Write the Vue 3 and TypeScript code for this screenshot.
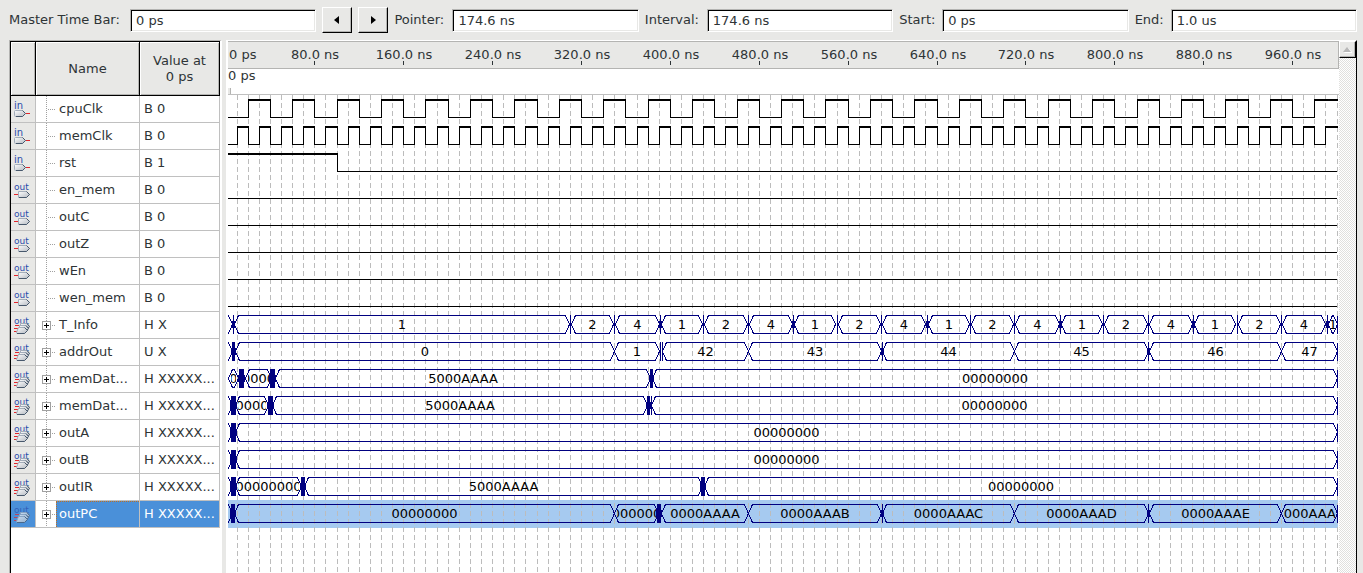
<script setup lang="ts">
import { computed, onBeforeUnmount, onMounted, ref } from 'vue'

interface Field {
  id: string
  label: string
  value: string
  cls: string
}

interface Cell {
  from: number
  to: number
  label: string
}

interface Burst {
  at: number
  width: number
}

interface Signal {
  name: string
  value: string
  kind: 'in' | 'out' | 'bus'
  high?: [number, number][]
  cells?: Cell[]
  bursts?: Burst[]
}

const END = 1000
const ROW = 27

const fields: Field[] = [
  { id: 'pointer', label: 'Pointer:', value: '174.6 ns', cls: 'pointer' },
  { id: 'interval', label: 'Interval:', value: '174.6 ns', cls: 'interval' },
  { id: 'start', label: 'Start:', value: '0 ps', cls: 'start' },
  { id: 'end', label: 'End:', value: '1.0 us', cls: 'end' },
]

function clock(period: number): [number, number][] {
  const out: [number, number][] = []
  for (let t = period / 2; t < END; t += period) out.push([t, Math.min(t + period / 2, END)])
  return out
}

function cells(...list: [number, number, string][]): Cell[] {
  return list.map(([from, to, label]) => ({ from, to, label }))
}

function bursts(...list: [number, number][]): Burst[] {
  return list.map(([at, width]) => ({ at, width }))
}

function stateCells(): Cell[] {
  const edges = [310, 350, 391, 430, 470, 511, 550, 590, 631, 670, 710, 751, 790, 830, 871, 910, 950, 991, 1000]
  const names = ['2', '4', '1']
  const list: Cell[] = [{ from: 8, to: 309, label: '1' }]
  for (let i = 0; i < edges.length - 1; i++) {
    list.push({ from: edges[i] + 1, to: i === edges.length - 2 ? END : edges[i + 1] - 1, label: names[i % 3] })
  }
  return list
}

const zeros = '00000000'

const signals: Signal[] = [
  { name: 'cpuClk', value: 'B 0', kind: 'in', high: clock(40) },
  { name: 'memClk', value: 'B 0', kind: 'in', high: clock(20) },
  { name: 'rst', value: 'B 1', kind: 'in', high: [[0, 100]] },
  { name: 'en_mem', value: 'B 0', kind: 'out', high: [] },
  { name: 'outC', value: 'B 0', kind: 'out', high: [] },
  { name: 'outZ', value: 'B 0', kind: 'out', high: [] },
  { name: 'wEn', value: 'B 0', kind: 'out', high: [] },
  { name: 'wen_mem', value: 'B 0', kind: 'out', high: [] },
  {
    name: 'T_Info', value: 'H X', kind: 'bus',
    cells: [{ from: -4, to: 6, label: '' }, ...stateCells()],
    bursts: bursts([7, 2], [310, 1], [350, 1], [391, 2], [430, 1], [470, 1], [511, 2], [550, 1], [590, 1], [631, 2],
      [670, 1], [710, 1], [751, 2], [790, 1], [830, 1], [871, 2], [910, 1], [950, 1], [991, 2]),
  },
  {
    name: 'addrOut', value: 'U X', kind: 'bus',
    cells: cells([-4, 6, ''], [9, 350, '0'], [350, 390, '1'], [393, 470, '42'], [470, 590, '43'], [591, 710, '44'],
      [710, 830, '45'], [831, 950, '46'], [950, 1000, '47']),
    bursts: bursts([7, 3], [391, 1], [393, 1], [591, 2], [830, 2]),
  },
  {
    name: 'memDat...', value: 'H XXXXX...', kind: 'bus',
    cells: cells([2, 11, '0'], [18, 41, zeros], [45, 382, '5000AAAA'], [384, 1000, zeros]),
    bursts: bursts([14, 5], [42, 5], [383, 3]),
  },
  {
    name: 'memDat...', value: 'H XXXXX...', kind: 'bus',
    cells: cells([-4, 6, ''], [9, 38, zeros], [42, 379, '5000AAAA'], [383, 1000, zeros]),
    bursts: bursts([7, 5], [40, 5], [380, 3], [383, 1]),
  },
  {
    name: 'outA', value: 'H XXXXX...', kind: 'bus',
    cells: cells([-4, 6, ''], [9, 1000, zeros]), bursts: bursts([7, 5]),
  },
  {
    name: 'outB', value: 'H XXXXX...', kind: 'bus',
    cells: cells([-4, 6, ''], [9, 1000, zeros]), bursts: bursts([7, 5]),
  },
  {
    name: 'outIR', value: 'H XXXXX...', kind: 'bus',
    cells: cells([-4, 6, ''], [9, 68, zeros], [71, 429, '5000AAAA'], [431, 1000, zeros]),
    bursts: bursts([7, 5], [70, 4], [430, 4]),
  },
  {
    name: 'outPC', value: 'H XXXXX...', kind: 'bus',
    cells: cells([-4, 6, ''], [8, 350, zeros], [350, 389, zeros], [392, 470, '0000AAAA'], [470, 590, '0000AAAB'],
      [591, 710, '0000AAAC'], [710, 830, '0000AAAD'], [831, 950, '0000AAAE'], [950, 1000, '0000AAAF']),
    bursts: bursts([7, 4], [390, 4], [591, 2], [830, 2]),
  },
]

const selected = 15
const plot = ref<HTMLElement | null>(null)
const width = ref(1111)
let observer: ResizeObserver | undefined

onMounted(() => {
  observer = new ResizeObserver(() => {
    if (plot.value) width.value = plot.value.clientWidth
  })
  if (plot.value) {
    width.value = plot.value.clientWidth
    observer.observe(plot.value)
  }
})
onBeforeUnmount(() => observer?.disconnect())

function px(t: number): number {
  return Math.floor((t * width.value) / 1000) - 2
}

const ticks = computed(() => {
  const list: { x: number; label: string }[] = []
  for (let t = 80; t < END; t += 80) list.push({ x: px(t), label: `${t}.0 ns` })
  return list
})

const gridLines = computed(() => Array.from({ length: 100 }, (_, i) => px((i + 1) * 10)))

interface Box {
  x: number
  y: number
  w: number
  h: number
}

const levels = computed<Box[]>(() => {
  const out: Box[] = []
  signals.forEach((s, i) => {
    if (!s.high) return
    const top = 1 + i * ROW
    let last = 0
    for (const [a, b] of s.high) {
      const xa = Math.max(px(a), 0)
      const xb = px(b)
      if (xa > last) out.push({ x: last, y: top + 21, w: xa - last, h: 1 })
      if (xa > 0) out.push({ x: xa, y: top + 3, w: 1, h: 19 })
      out.push({ x: xa, y: top + 3, w: xb - xa + 1, h: 2 })
      if (b < END) out.push({ x: xb, y: top + 3, w: 1, h: 19 })
      last = xb
    }
    if (last < px(END)) out.push({ x: last, y: top + 21, w: px(END) - last, h: 1 })
  })
  return out
})

const outlines = computed(() => {
  const out: { d: string }[] = []
  signals.forEach((s, i) => {
    const top = 4 + i * ROW
    const bottom = top + 18
    const mid = top + 9
    for (const c of s.cells ?? []) {
      const a = px(c.from)
      const b = px(c.to)
      const k = Math.min(4, Math.floor((b - a) / 2))
      out.push({
        d: `M${a} ${mid}L${a + k} ${top}H${b - k}L${b} ${mid}L${b - k} ${bottom}H${a + k}Z`,
      })
    }
    if (s.cells) out.push({ d: `M${px(END)} ${top}V${bottom}` })
  })
  return out
})

const blocks = computed<Box[]>(() => {
  const out: Box[] = []
  signals.forEach((s, i) => {
    const top = 4 + i * ROW
    for (const b of s.bursts ?? []) {
      const x = px(b.at)
      if (b.width === 2) {
        out.push({ x, y: top, w: 1, h: 19 }, { x: x - 1, y: top + 6, w: 3, h: 7 })
      } else {
        out.push({ x: x - Math.floor(b.width / 2), y: top, w: b.width, h: 19 })
        if (b.width > 2) out.push({ x: x - Math.floor(b.width / 2) - 1, y: top + 6, w: b.width + 2, h: 7 })
      }
    }
  })
  return out
})

const labels = computed(() => {
  const out: { x: number; y: number; w: number; text: string }[] = []
  signals.forEach((s, i) => {
    for (const c of s.cells ?? []) {
      if (!c.label) continue
      const a = px(c.from) + 3
      out.push({ x: a, y: 2 + i * ROW, w: Math.max(px(c.to) - 2 - a, 4), text: c.label })
    }
  })
  return out
})
</script>

<template>
  <main class="viewer">
    <form class="toolbar" @submit.prevent>
      <label class="master" for="master">Master Time Bar:</label>
      <input id="master" type="text" value="0 ps" />
      <button type="button" aria-label="Previous transition">
        <svg width="6" height="8" viewBox="0 0 6 8"><path d="M5 0V8L0 4Z" /></svg>
      </button>
      <button type="button" aria-label="Next transition">
        <svg width="6" height="8" viewBox="0 0 6 8"><path d="M1 0V8L6 4Z" /></svg>
      </button>
      <template v-for="f in fields" :key="f.id">
        <label :class="f.cls" :for="f.id">{{ f.label }}</label>
        <input :id="f.id" type="text" :value="f.value" />
      </template>
    </form>

    <div class="panes">
      <section class="list">
        <table>
          <colgroup><col class="c-icon" /><col class="c-name" /><col /></colgroup>
          <thead>
            <tr><th></th><th>Name</th><th>Value at<br />0 ps</th></tr>
          </thead>
          <tbody>
            <tr v-for="(s, i) in signals" :key="i" :class="{ selected: i === selected }">
              <td class="icon">
                <svg width="18" height="22" viewBox="0 0 18 22">
                  <defs>
                    <linearGradient :id="`tag${i}`" x1="0" y1="0" x2="1" y2="1">
                      <stop offset="0" stop-color="#fdfdfd" />
                      <stop offset="1" stop-color="#b4bac2" />
                    </linearGradient>
                  </defs>
                  <text v-if="s.kind === 'in'" class="big" x="0" y="10">in</text>
                  <text v-else x="0" :y="s.kind === 'out' ? 10 : 9">out</text>
                  <g v-if="s.kind === 'in'">
                    <path class="wire" d="M12 14.5H16" />
                    <path class="tag" :fill="`url(#tag${i})`" d="M1.5 11.5H8.5L11.5 14.5L8.5 17.5H1.5Q0.5 17.5 .5 16.5V12.5Q.5 11.5 1.5 11.5Z" />
                    <path class="shade" d="M8.5 11.5L11.5 14.5L8.5 17.5H2" />
                  </g>
                  <g v-else-if="s.kind === 'out'">
                    <path class="wire" d="M0 14.5H4" />
                    <path class="tag" :fill="`url(#tag${i})`" d="M4.5 11.5H12.5L15.5 14.5L12.5 17.5H4.5Z" />
                    <path class="shade" d="M12.5 11.5L15.5 14.5L12.5 17.5H5" />
                  </g>
                  <g v-else>
                    <path class="wire" d="M1 10.5H5M0 13.5H4M0 16.5H3" />
                    <path class="tag" :fill="`url(#tag${i})`" d="M6.5 8.5H13L15.5 11.5L13 14.5H6.5Z" />
                    <path class="shade" d="M13 8.5L15.5 11.5L13 14.5" />
                    <path class="tag" :fill="`url(#tag${i})`" d="M5.5 10.5H12L14.5 13.5L12 16.5H5.5Z" />
                    <path class="shade" d="M12 10.5L14.5 13.5L12 16.5" />
                    <path class="tag" :fill="`url(#tag${i})`" d="M4.5 12.5H10.5L13.5 15.5L10.5 18.5H3.5Q2.5 18.5 2.5 17.5Z" />
                    <path class="shade" d="M10.5 12.5L13.5 15.5L10.5 18.5H3" />
                  </g>
                </svg>
              </td>
              <td class="name">
                <div class="node">
                  <span class="branch">
                    <button v-if="s.kind === 'bus'" type="button" class="expand" :aria-label="`Expand ${s.name}`">
                      <svg width="7" height="7" viewBox="0 0 7 7"><path d="M1 3H6V4H1ZM3 1H4V6H3Z" /></svg>
                    </button>
                  </span>
                  <span class="text">{{ s.name }}</span>
                </div>
              </td>
              <td class="value">{{ s.value }}</td>
            </tr>
          </tbody>
        </table>
      </section>

      <section class="waves">
        <div ref="plot" class="plot">
          <svg class="ruler">
            <text x="1" y="17">0 ps</text>
            <g v-for="t in ticks" :key="t.x">
              <text :x="t.x + 1" y="17" text-anchor="middle">{{ t.label }}</text>
              <rect :x="t.x" y="19" width="1" height="4" />
            </g>
          </svg>
          <div class="cursor">0 ps<i></i></div>
          <svg class="traces" shape-rendering="crispEdges">
            <rect class="hilite" x="0" :y="selected * ROW" :width="width - 1" height="28" />
            <line v-for="x in gridLines" :key="x" class="grid" :x1="x" :x2="x" y1="0" y2="100%" transform="translate(.5 0)" />
            <svg v-for="(l, i) in labels" :key="`l${i}`" :x="l.x" :y="l.y" :width="l.w" height="24">
              <text x="50%" y="16" text-anchor="middle">{{ l.text }}</text>
            </svg>
            <g class="level">
              <rect v-for="(b, i) in levels" :key="i" :x="b.x" :y="b.y" :width="b.w" :height="b.h" />
            </g>
            <g class="bus">
              <path v-for="(o, i) in outlines" :key="i" :d="o.d" transform="translate(.5 .5)" />
              <rect v-for="(b, i) in blocks" :key="`b${i}`" :x="b.x" :y="b.y" :width="b.w" :height="b.h" />
            </g>
          </svg>
        </div>
        <div class="scroll">
          <button type="button" aria-label="Scroll up">
            <svg width="9" height="6" viewBox="0 0 9 6"><path fill="#fff" d="M1 6H9V5L5 1Z" /><path fill="#b8b8b8" d="M0 5H8L4 0Z" /></svg>
          </button>
        </div>
      </section>
    </div>
  </main>
</template>

<style>
body {
  margin: 0;
  background: #e8e8e6;
}
</style>

<style scoped>
.viewer {
  display: flex;
  flex-direction: column;
  height: 100vh;
  overflow: hidden;
  background: #e8e8e6;
  color: #2e3436;
  font: 13px/16px "DejaVu Sans", sans-serif;
}

button {
  box-sizing: border-box;
  padding: 0;
  display: flex;
  align-items: center;
  justify-content: center;
  background: #e8e8e6;
  border: 1px solid;
  border-color: #fff #000 #000 #fff;
  box-shadow: inset -1px -1px 0 #b4b4b2;
  flex: none;
}

.toolbar {
  display: flex;
  align-items: center;
  height: 40px;
  padding: 0 0 0 9px;
  flex: none;
}

.toolbar label {
  flex: none;
  white-space: nowrap;
}

.toolbar .master { width: 121px; }
.toolbar .pointer { width: 58px; }
.toolbar .interval { width: 62px; }
.toolbar .start { width: 43px; }
.toolbar .end { width: 36px; }

.toolbar input {
  box-sizing: border-box;
  flex: 1 1 0;
  min-width: 0;
  height: 23px;
  margin-right: 6px;
  padding: 0 5px;
  border: 1px solid;
  border-color: #b4b4b2 #fff #fff #b4b4b2;
  box-shadow: inset 1px 1px 0 #000, inset -1px -1px 0 #e8e8e6;
  border-radius: 0;
  background: #fff;
  color: inherit;
  font: inherit;
  outline: none;
}

.toolbar button {
  width: 30px;
  height: 26px;
  margin-right: 6px;
}

.panes {
  display: flex;
  flex: 1;
  min-height: 0;
  padding: 0 6px 0 9px;
}

.list {
  box-sizing: border-box;
  flex: none;
  width: 213px;
  border: solid;
  border-width: 1px 2px 0 1px;
  border-color: #b4b4b2 #fff #fff #b4b4b2;
  box-shadow: inset 1px 0 0 #000;
  background: #fff;
  overflow: hidden;
}

table {
  width: 100%;
  box-sizing: border-box;
  border-collapse: separate;
  border-spacing: 0;
  table-layout: fixed;
  border: solid #000;
  border-width: 1px 0 0 1px;
}

.c-icon { width: 25px; }
.c-name { width: 104px; }

th {
  box-sizing: border-box;
  height: 54px;
  padding: 0;
  border: solid #000;
  border-width: 0 1px 1px 0;
  background: #e8e8e6;
  box-shadow: inset 1px 1px 0 #fff, inset -1px -1px 0 #b4b4b2;
  font-weight: normal;
  text-align: center;
}

td {
  box-sizing: border-box;
  height: 27px;
  padding: 0;
  border: solid #c0c0c0;
  border-width: 0 1px 1px 0;
  white-space: nowrap;
  vertical-align: top;
}

td.icon {
  background: #e8e8e6;
  padding: 3px 0 0 3px;
  line-height: 0;
}

.icon text {
  font: 9px "DejaVu Sans", sans-serif;
  fill: #2a4cac;
}

.icon text.big { font-size: 10px; }

.icon svg { display: block; }
.wire { stroke: #e2262c; fill: none; }
.tag { stroke: #a3adba; }
.shade { stroke: #47586c; fill: none; }

.node {
  display: flex;
  height: 26px;
  line-height: 26px;
}

.branch {
  box-sizing: border-box;
  position: relative;
  flex: none;
  width: 20px;
  height: 26px;
  background: linear-gradient(#a0a0a0 50%, transparent 50%) 10px 0 / 1px 2px repeat-y, #fff;
}

.branch::after {
  content: "";
  position: absolute;
  left: 12px;
  right: 0;
  top: 13px;
  height: 1px;
  background: linear-gradient(90deg, #a0a0a0 50%, transparent 50%) 0 0 / 2px 1px repeat-x;
}

.expand {
  position: absolute;
  z-index: 1;
  left: 6px;
  top: 9px;
  width: 9px;
  height: 9px;
  border: 1px solid #a0a0a0;
  box-shadow: none;
  background: #fff;
}

.expand svg { flex: none; }

.text {
  flex: 1;
  padding-left: 3px;
}

.value {
  padding-left: 4px;
  line-height: 26px;
}

.selected td {
  background: #4a90d9;
  color: #fff;
}

.selected .icon svg { opacity: .7; }

.selected .text {
  border-left: 1px dotted #c07020;
  border-top: 1px dotted #c07020;
  padding-left: 2px;
  line-height: 24px;
}

.waves {
  display: flex;
  flex: 1;
  min-width: 0;
  margin-left: 4px;
  border: solid #fff;
  border-width: 1px 0 0 2px;
  border-right: 1px solid #000;
}

.plot {
  flex: 1;
  min-width: 0;
  display: flex;
  flex-direction: column;
  background: #fff;
}

.ruler {
  box-sizing: border-box;
  display: block;
  flex: none;
  width: 100%;
  height: 28px;
  border: solid #b4b4b2;
  border-width: 1px 1px 1px 0;
  background: #e8e8e6;
  fill: #2e3436;
}

.cursor {
  position: relative;
  box-sizing: border-box;
  flex: none;
  height: 26px;
  line-height: 14px;
  border-bottom: 1px solid #c0c0c0;
}

.cursor i {
  position: absolute;
  left: 0;
  bottom: 0;
  width: 2px;
  height: 6px;
  background: #e8e8e6;
  border-right: 1px solid #b4b4b2;
}

.traces {
  display: block;
  flex: 1;
  min-height: 0;
  width: 100%;
}

.traces text { fill: #000; }
.traces svg { overflow: hidden; }
.hilite { fill: #a6caf0; }
.grid { stroke: #bcbcbc; stroke-width: 1px; stroke-dasharray: 5 3; }
.bus path { fill: none; stroke: #000080; }
.bus rect { fill: #000080; }

.scroll {
  flex: none;
  width: 17px;
  background: repeating-conic-gradient(#fff 0 25%, #e0e0de 0 50%) 0 0 / 2px 2px;
}

.scroll button {
  width: 17px;
  height: 17px;
}
</style>
